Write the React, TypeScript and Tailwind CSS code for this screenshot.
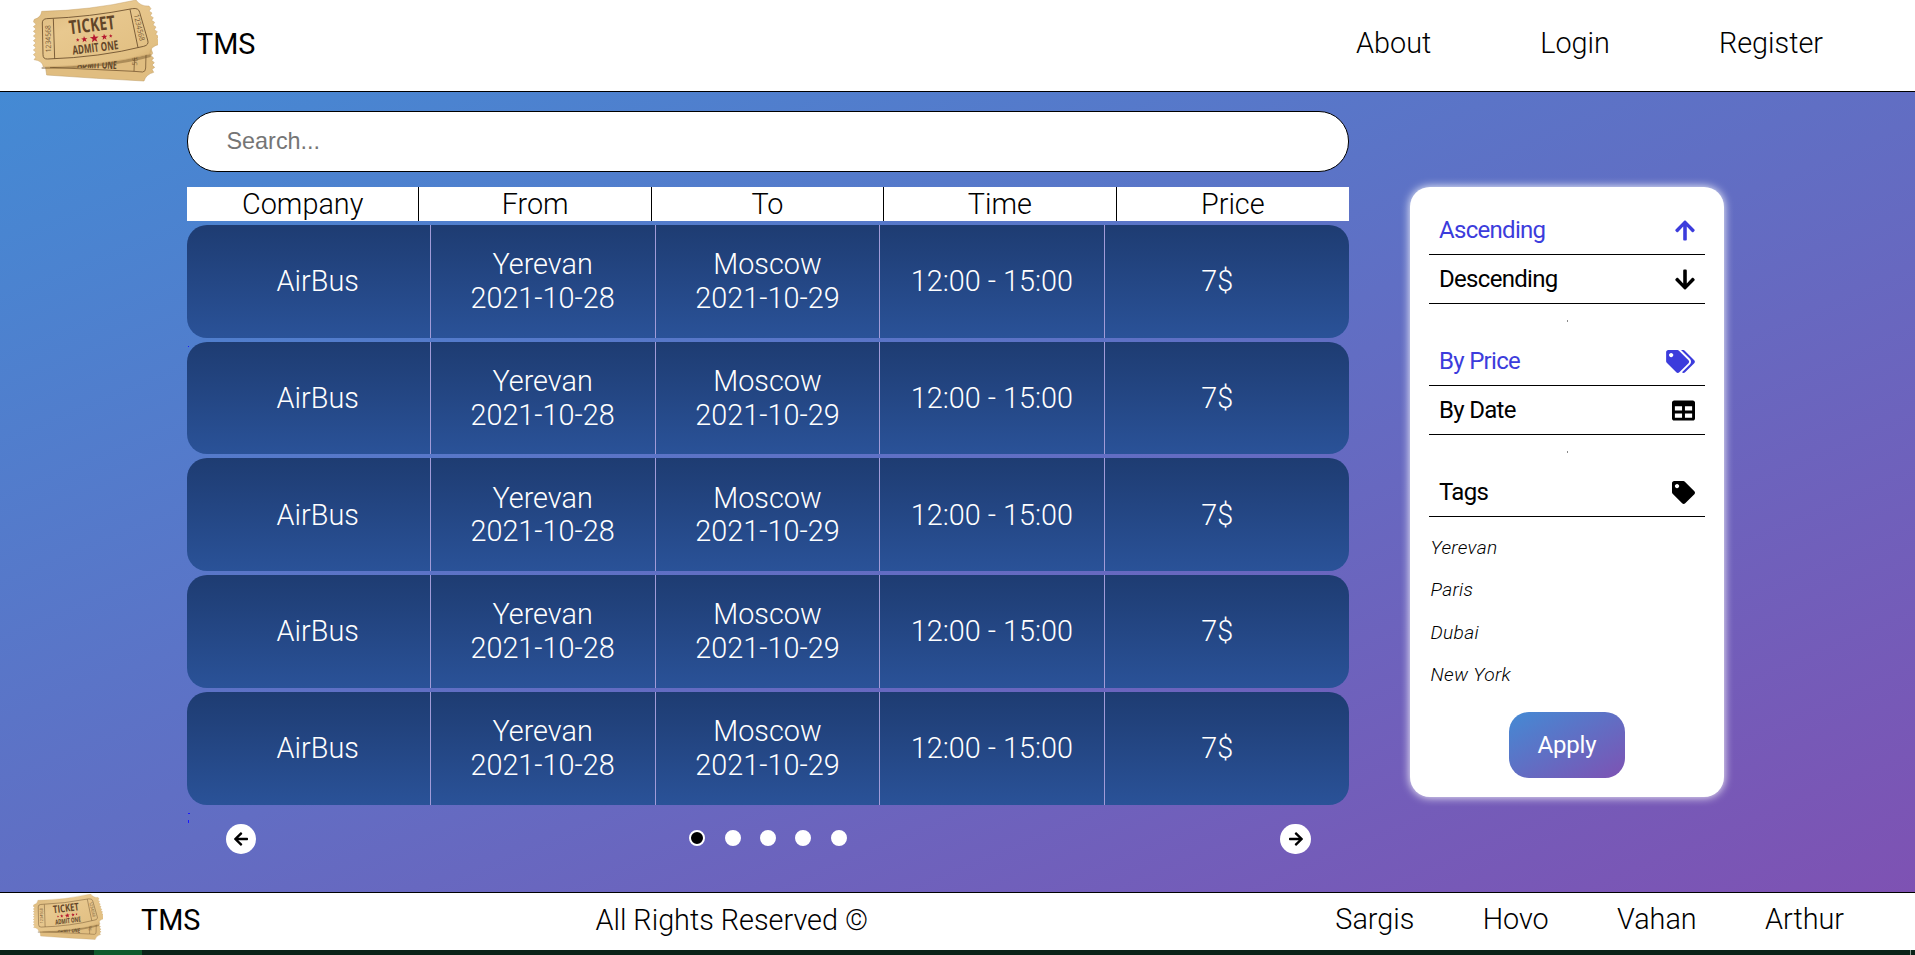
import React from "react";
import {
  FaArrowDown,
  FaArrowLeft,
  FaArrowRight,
  FaArrowUp,
  FaTable,
  FaTag,
  FaTags,
} from "react-icons/fa";

const columns = ["Company", "From", "To", "Time", "Price"];

const tickets = Array.from({ length: 5 }, (_, id) => ({
  id,
  company: "AirBus",
  from: "Yerevan",
  departure: "2021-10-28",
  to: "Moscow",
  arrival: "2021-10-29",
  time: "12:00 - 15:00",
  price: "7$",
}));

const cities = ["Yerevan", "Paris", "Dubai", "New York"];
const authors = ["Sargis", "Hovo", "Vahan", "Arthur"];

function TicketLogo({ id, className }: { id: string; className: string }) {
  return (
    <svg viewBox="99 -1 375 246" className={className} preserveAspectRatio="none">
      <defs>
        <linearGradient id={id} x1="0" y1="0" x2="1" y2="1">
          <stop offset="0" stopColor="#d9b679" />
          <stop offset="0.35" stopColor="#e8c88f" />
          <stop offset="0.8" stopColor="#e2c083" />
          <stop offset="1" stopColor="#cfa765" />
        </linearGradient>
      </defs>
      <path
        d="M135 190 L140 224 L290 234 L432 242 Q438 222 461 216 l-5 -9 l8 -6 l-8 -7 l7 -7 l-8 -7 l6 -7 l-8 -7 l5 -7 L448 130 Z"
        fill="#e0bd80"
        stroke="#bd9a60"
        strokeWidth="1.5"
      />
      <path d="M150 201 L402 213 L404 160 M402 213 L428 215 Q437 214 437 203 L438 160" fill="none" stroke="#7b5c35" strokeWidth="2.5" />
      <text x="232" y="202" transform="rotate(2 232 202)" textLength="118" lengthAdjust="spacingAndGlyphs" fill="#5e452a" className="font-['Open_Sans'] text-[34px] font-bold">
        ADMIT ONE
      </text>
      <text transform="translate(411 196) rotate(-86)" textLength="35" lengthAdjust="spacingAndGlyphs" fill="#80633c" className="font-['Open_Sans'] text-[21px]">
        568
      </text>
      <path d="M125 200 Q300 200 452 161 L452 170 Q330 204 125 206 Z" fill="#6d5027" opacity="0.45" />
      <path
        d="M125 33 Q270 30 408 -1 Q422 19 447 17 l6 8 l-6 7 l9 6 l-5 8 l9 6 l-5 8 l9 6 l-5 8 l9 6 l-5 8 l9 6 l-5 8 l9 6 l-5 8 l8 7 l3 8 Q448 138 450 161 Q310 196 130 200 Q128 181 102 178 l6 -8 l-8 -7 l8 -7 l-8 -7 l8 -7 l-8 -7 l8 -7 l-8 -7 l8 -7 l-8 -7 l8 -7 l-8 -7 l8 -7 l-8 -7 l8 -7 l-8 -8 l3 -7 Q123 52 125 33 Z"
        fill={`url(#${id})`}
        stroke="#bf9b61"
        strokeWidth="1.2"
      />
      <path
        d="M140 55 Q270 50 397 25 Q416 22 419 36 L443 119 Q448 134 431 138 Q300 171 143 176 Q129 177 129 163 L127 68 Q127 56 140 55 Z M160 55 L164 175 M390 27 L414 142"
        fill="none"
        stroke="#6b4e2c"
        strokeWidth="2.6"
      />
      <text transform="translate(209 102) rotate(-7)" textLength="139" lengthAdjust="spacingAndGlyphs" fill="#624529" className="font-['Open_Sans'] text-[57px] font-bold">
        TICKET
      </text>
      <text transform="translate(219 163) rotate(-7)" textLength="138" lengthAdjust="spacingAndGlyphs" fill="#624529" className="font-['Open_Sans'] text-[37px] font-bold">
        ADMIT ONE
      </text>
      <text transform="translate(153 156) rotate(-91)" textLength="82" lengthAdjust="spacingAndGlyphs" fill="#795a36" className="font-['Open_Sans'] text-[22px]">
        1234568
      </text>
      <text transform="translate(401 43) rotate(77)" textLength="82" lengthAdjust="spacingAndGlyphs" fill="#795a36" className="font-['Open_Sans'] text-[22px]">
        1234568
      </text>
      {[
        [233, 119, 6],
        [253, 117, 10],
        [283, 114, 14],
        [313, 110, 10],
        [332, 107, 6],
      ].map(([x, y, r]) => (
        <path
          key={x}
          transform={`translate(${x} ${y}) rotate(-6) scale(${r})`}
          d="M0 -1 L.24 -.33 L.95 -.31 L.38 .12 L.59 .81 L0 .4 L-.59 .81 L-.38 .12 L-.95 -.31 L-.24 -.33 Z"
          fill="#b5172f"
        />
      ))}
    </svg>
  );
}

function Option({
  label,
  icon,
  active = false,
}: {
  label: string;
  icon: React.ReactNode;
  active?: boolean;
}) {
  return (
    <button
      className={`flex h-[49px] w-full items-center justify-between border-b border-black px-[10px] text-[24px] leading-[28px] tracking-[-0.7px] ${
        active ? "text-[#3c3cdc]" : "text-black"
      }`}
    >
      <span>{label}</span>
      {icon}
    </button>
  );
}

function Separator() {
  return (
    <div className="flex h-[33px] items-center justify-center">
      <span className="h-0.5 w-px bg-[#8a8a8a]" />
    </div>
  );
}

export default function App() {
  return (
    <div className="flex h-[955px] w-[1915px] flex-col overflow-hidden bg-white font-['Roboto',sans-serif] text-black">
      <header className="flex h-[92px] shrink-0 items-start border-b border-black pr-[92px] pl-[33px]">
        <TicketLogo id="ticket-header" className="h-[82px] w-[125px]" />
        <span className="ml-[38px] pt-[27px] text-[28.8px] leading-[34px]">TMS</span>
        <nav className="ml-auto flex gap-[109px] pt-[26px] text-[28.8px] leading-[34px] font-light">
          <a>About</a>
          <a>Login</a>
          <a>Register</a>
        </nav>
      </header>

      <main className="flex h-[800px] shrink-0 items-start bg-linear-to-br/srgb from-[#448ad4] to-[#7e52b3] pl-[187px]">
        <section className="relative w-[1162px] pt-[19px]">
          <input
            placeholder="Search..."
            className="block h-[61px] w-full rounded-[30px] border border-black bg-white px-[38.5px] pb-px font-['Liberation_Sans',sans-serif] text-[23.4px] placeholder:text-[#757575]"
          />
          <div className="mt-[15px] grid h-[33.75px] grid-cols-5 bg-white text-center text-[28.8px] leading-[35.75px] font-light">
            {columns.map((name) => (
              <div key={name} className="h-[33.75px] border-r border-black last:border-r-0">
                {name}
              </div>
            ))}
          </div>
          <div className="mt-1 flex flex-col gap-1">
            {tickets.map((t) => (
              <div
                key={t.id}
                className="grid h-[112.75px] grid-cols-5 rounded-[20px] bg-linear-to-b from-[#1e3c72] to-[#2a5298] px-5 text-center text-[28.8px] leading-[33.75px] font-light text-white *:flex *:flex-col *:justify-center *:border-r *:border-[#a19bd8] *:pt-[1.5px]"
              >
                <div className="pr-[2px]">{t.company}</div>
                <div className="pr-px">
                  <span>{t.from}</span>
                  <span>{t.departure}</span>
                </div>
                <div>
                  <span>{t.to}</span>
                  <span>{t.arrival}</span>
                </div>
                <div>{t.time}</div>
                <div className="border-r-0! pl-px">{t.price}</div>
              </div>
            ))}
          </div>
          <span className="absolute top-[254px] left-px size-px bg-[#1a1aff]" />
          <span className="absolute top-[721px] left-px h-px w-0.5 bg-[#1a1aff]" />
          <span className="absolute top-[728px] left-px h-[3px] w-px bg-[#1a1aff]" />
          <div className="mt-[19px] flex h-[31px] items-center justify-between pr-[38px] pl-[39px]">
            <button className="flex size-[30px] items-center justify-center rounded-full bg-white">
              <FaArrowLeft size={16} />
            </button>
            <div className="flex items-center gap-[19.3px] pb-[3px]">
              {tickets.map((t) => (
                <span
                  key={t.id}
                  className={`size-4 rounded-full border-2 border-white ${t.id === 0 ? "bg-black" : "bg-white"}`}
                />
              ))}
            </div>
            <button className="flex h-[30px] w-[31px] items-center justify-center rounded-full bg-white">
              <FaArrowRight size={16} />
            </button>
          </div>
        </section>

        <aside className="mt-[95px] ml-[61px] flex h-[610px] w-[314px] flex-col rounded-[20px] bg-white px-[19px] pt-[19px] shadow-[0_0_10px_#fff]">
          <Option label="Ascending" icon={<FaArrowUp className="h-[23px] w-5" />} active />
          <Option label="Descending" icon={<FaArrowDown className="h-[23px] w-5" />} />
          <Separator />
          <Option label="By Price" icon={<FaTags className="h-[23px] w-[29px]" />} active />
          <Option label="By Date" icon={<FaTable className="size-[23px]" />} />
          <Separator />
          <Option label="Tags" icon={<FaTag className="size-[23px]" />} />
          <ul className="mt-[10px] pl-[1.6px] text-[19.2px] leading-[42.3px] font-light tracking-[0.3px] italic">
            {cities.map((city) => (
              <li key={city}>{city}</li>
            ))}
          </ul>
          <button className="mt-[16px] h-[66px] w-[116px] self-center rounded-[20px] bg-linear-to-br/srgb from-[#448ad4] to-[#7e52b3] text-[24px] tracking-[-0.2px] text-white">
            Apply
          </button>
        </aside>
      </main>

      <footer className="flex h-[58px] shrink-0 items-start border-t border-black pr-[71px] pl-[33px]">
        <TicketLogo id="ticket-footer" className="mt-px h-[46px] w-[70px]" />
        <span className="ml-[38px] pt-[10px] text-[28.8px] leading-[34px]">TMS</span>
        <span className="ml-[395px] pt-[10px] text-[28.8px] leading-[34px] font-light">
          All Rights Reserved ©
        </span>
        <div className="ml-auto flex gap-[68.3px] pt-[9px] text-[28.8px] leading-[34px] font-light">
          {authors.map((name) => (
            <a key={name}>{name}</a>
          ))}
        </div>
      </footer>
      <div className="flex h-[5px] shrink-0 bg-[#0a2318] pr-1 pl-[94px]">
        <span className="w-12 bg-[#0f5a2c]" />
        <span className="ml-auto w-px bg-[#8a9a90]" />
      </div>
    </div>
  );
}
